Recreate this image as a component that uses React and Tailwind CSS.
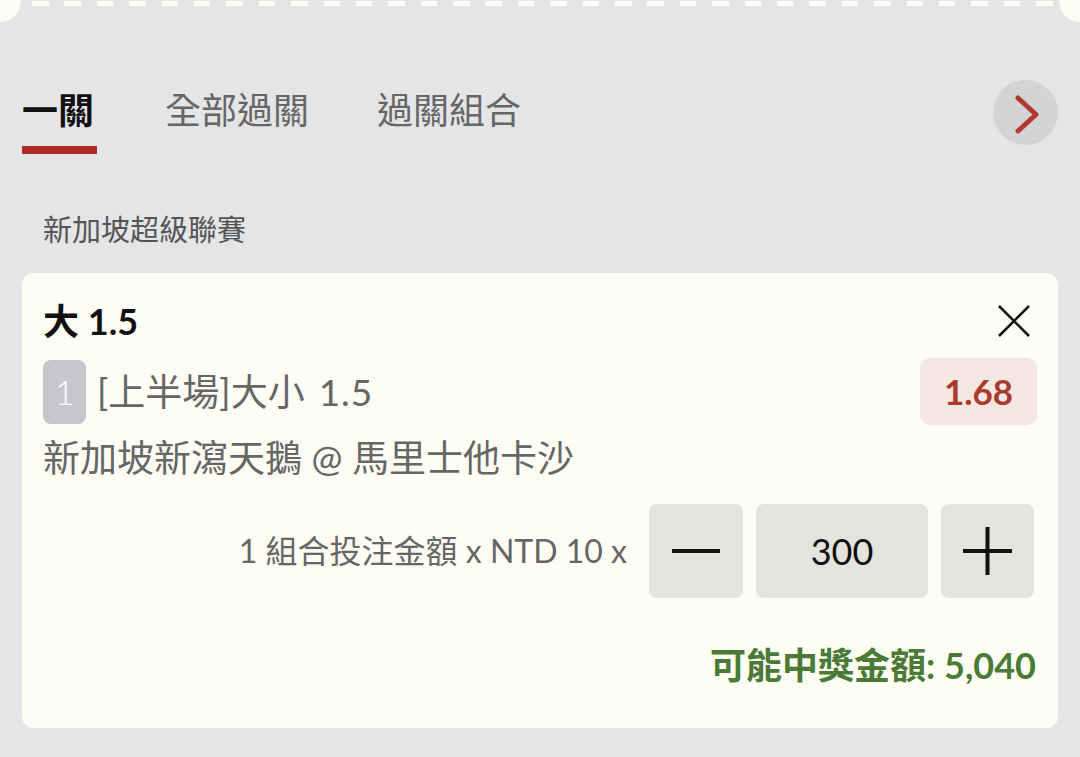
const CREAM = 'bg-[#fdfdf4]';

const dashes = Array.from({ length: 32 });

const App = () => {
  return (
    <div
      className="w-[1080px] h-[757px] overflow-hidden bg-[#e4e5e7]"
      style={{ fontFamily: 'Lato, "Noto Sans CJK TC", sans-serif' }}
    >
      {/* ticket edge */}
      <div className="flex h-[22px] items-start">
        <div className={`w-[21px] h-[22px] ${CREAM} rounded-br-[21px]`} />
        <div className="flex flex-1 gap-[15.9px] pl-[11px] pt-[1px]">
          {dashes.map((_, i) => (
            <div key={i} className={`w-[16.5px] h-[5px] ${CREAM}`} />
          ))}
        </div>
        <div className={`w-[21px] h-[22px] ${CREAM} rounded-bl-[21px]`} />
      </div>

      {/* tabs */}
      <div className="mt-[58px] flex items-start px-[22px]">
        <div className="flex gap-[68px]">
          <div className="flex flex-col items-start">
            <div className="h-[60px] text-[36px] leading-[60px] font-bold text-[#111]">一關</div>
            <div className="mt-[6px] h-[8px] w-[75px] bg-[#b22a24]" />
          </div>
          <div className="h-[60px] text-[36px] leading-[60px] text-[#666]">全部過關</div>
          <div className="h-[60px] text-[36px] leading-[60px] text-[#666]">過關組合</div>
        </div>
        <button className="ml-auto flex h-[65px] w-[65px] items-center justify-center rounded-full bg-[#d4d4d6]">
          <svg width="65" height="65" viewBox="0 0 65 65">
            <polyline
              points="25,18 43,34.5 25,51"
              fill="none"
              stroke="#b03a2e"
              strokeWidth="5"
              strokeLinecap="round"
              strokeLinejoin="round"
            />
          </svg>
        </button>
      </div>

      <div className="mt-[56px] px-[43px] text-[29px] leading-[40px] text-[#555]">新加坡超級聯賽</div>

      {/* bet card */}
      <div className={`mx-[22px] mt-[23px] h-[455px] rounded-[12px] ${CREAM} px-[21px] pt-[24px]`}>
        <div className="flex h-[48px] items-center justify-between">
          <div className="text-[36px] font-bold text-[#111]">大 1.5</div>
          <svg className="mr-[7px]" width="32" height="32" viewBox="0 0 32 32">
            <path d="M1 1 L31 31 M31 1 L1 31" stroke="#111" strokeWidth="2.6" />
          </svg>
        </div>

        <div className="mt-[13px] flex h-[67px] items-center justify-between">
          <div className="flex items-center gap-[11px]">
            <div className="flex h-[64px] w-[43px] items-center justify-center rounded-[8px] bg-[#c6c6cc] text-[34px] font-light text-white">
              1
            </div>
            <div className="flex items-baseline text-[37px] text-[#666]">
              <span>[上半場]大小</span>
              <span className="ml-[14px] tracking-[1px]">1.5</span>
            </div>
          </div>
          <div className="flex h-[67px] w-[117px] items-center justify-center rounded-[10px] bg-[#f4e6e0] text-[35px] font-bold text-[#a83a30]">
            1.68
          </div>
        </div>

        <div className="mt-[9px] text-[37px] leading-[48px] text-[#666]">新加坡新瀉天鵝 @ 馬里士他卡沙</div>

        <div className="mt-[22px] flex items-center justify-end pr-[3px]">
          <div className="mr-[22px] text-[32px] text-[#666]">1 組合投注金額 x NTD 10 x</div>
          <div className="flex gap-[13px]">
            <button className="flex h-[94px] w-[94px] items-center justify-center rounded-[8px] bg-[#e4e4de]">
              <svg width="48" height="8" viewBox="0 0 48 8">
                <rect x="0" y="2" width="48" height="4" fill="#111" />
              </svg>
            </button>
            <div className="flex h-[94px] w-[172px] items-center justify-center rounded-[8px] bg-[#e4e4de] text-[36px] text-[#111]">
              300
            </div>
            <button className="flex h-[94px] w-[93px] items-center justify-center rounded-[8px] bg-[#e4e4de]">
              <svg width="49" height="48" viewBox="0 0 49 48">
                <rect x="0" y="22" width="49" height="4" fill="#111" />
                <rect x="22.5" y="0" width="4" height="48" fill="#111" />
              </svg>
            </button>
          </div>
        </div>

        <div className="mt-[43px] flex justify-end pr-[1px] text-[36px] font-bold leading-[48px] text-[#4a7a35]">
          可能中獎金額: 5,040
        </div>
      </div>
    </div>
  );
};

export default App;
